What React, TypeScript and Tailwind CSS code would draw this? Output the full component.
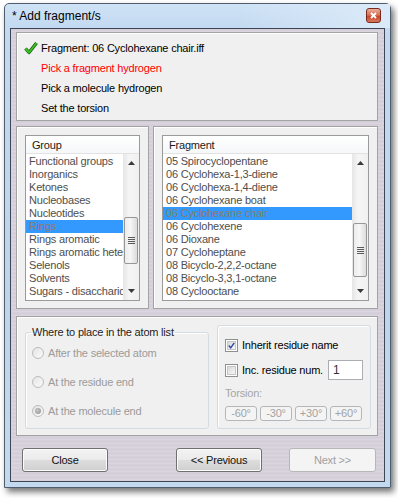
import React from "react";

const groups = [
  "Functional groups",
  "Inorganics",
  "Ketones",
  "Nucleobases",
  "Nucleotides",
  "Rings",
  "Rings aromatic",
  "Rings aromatic heterocycles",
  "Selenols",
  "Solvents",
  "Sugars - disaccharides",
  "Sugars - monosaccharides",
];

const fragments = [
  "05 Spirocyclopentane",
  "06 Cyclohexa-1,3-diene",
  "06 Cyclohexa-1,4-diene",
  "06 Cyclohexane boat",
  "06 Cyclohexane chair",
  "06 Cyclohexene",
  "06 Dioxane",
  "07 Cycloheptane",
  "08 Bicyclo-2,2,2-octane",
  "08 Bicyclo-3,3,1-octane",
  "08 Cyclooctane",
  "09 Cyclononane",
];

function Arrow({ down }: { down?: boolean }) {
  return (
    <svg width="7" height="4" viewBox="0 0 7 4" className="block">
      {down ? (
        <polygon points="0,0 7,0 3.5,4" fill="#3a3a3a" />
      ) : (
        <polygon points="0,4 7,4 3.5,0" fill="#3a3a3a" />
      )}
    </svg>
  );
}

// scrollbar: thumbGap = distance from under the up button to the thumb
function ScrollBar({ thumbGap, thumbH }: { thumbGap: number; thumbH: number }) {
  return (
    <div className="w-[16px] shrink-0 flex flex-col bg-[linear-gradient(90deg,#e6e6e6,#f5f5f5_40%,#f0f0f0)]">
      <div className="h-[17px] flex items-center justify-center pt-[1px]">
        <Arrow />
      </div>
      <div style={{ height: thumbGap }} />
      <div
        className="mx-[1px] rounded-[2px] border border-[#979797] bg-[linear-gradient(90deg,#ececec,#f6f6f6_45%,#dcdcdc)] flex flex-col items-center justify-center gap-[1px]"
        style={{ height: thumbH }}
      >
        <div className="w-[7px] h-[1px] bg-[#5a5a5a]" />
        <div className="w-[7px] h-[1px] bg-[#5a5a5a]" />
        <div className="w-[7px] h-[1px] bg-[#5a5a5a]" />
        <div className="w-[7px] h-[1px] bg-[#5a5a5a]" />
      </div>
      <div className="flex-1" />
      <div className="h-[17px] flex items-center justify-center pb-[1px]">
        <Arrow down />
      </div>
    </div>
  );
}

function ListBox(props: {
  title: string;
  items: string[];
  selected: number;
  thumbGap: number;
  thumbH: number;
}) {
  return (
    <div className="flex-1 min-w-0 flex flex-col border border-[#9a9a9a] bg-white">
      <div className="h-[18px] border-b border-[#e2e2e2] bg-[linear-gradient(180deg,#ffffff,#f6f7f9)] pl-[6px] pt-[2px] text-[11px] leading-[15px] text-[#1a1a1a]">
        {props.title}
      </div>
      <div className="flex-1 flex min-h-0">
        <div className="flex-1 min-w-0 overflow-hidden pt-[1px]">
          {props.items.map((it, i) => (
            <div
              key={it}
              className={
                i === props.selected
                  ? "h-[13px] leading-[13px] pl-[3px] whitespace-nowrap overflow-hidden bg-[#3399ff] text-[#8c7c66]"
                  : "h-[13px] leading-[13px] pl-[3px] whitespace-nowrap overflow-hidden text-[#4e4e4e]"
              }
            >
              {it}
            </div>
          ))}
        </div>
        <ScrollBar thumbGap={props.thumbGap} thumbH={props.thumbH} />
      </div>
    </div>
  );
}

function Radio({ label, checked }: { label: string; checked?: boolean }) {
  return (
    <div className="h-[20px] flex items-center gap-[4px] pl-[6px]">
      <div className="w-[12px] h-[12px] rounded-full border border-[#bdbdbd] bg-[linear-gradient(135deg,#e4e4e4,#fbfbfb)] flex items-center justify-center">
        {checked && <div className="w-[6px] h-[6px] rounded-full bg-[radial-gradient(circle_at_40%_40%,#c8c8c8,#8c8c8c)]" />}
      </div>
      <span className="text-[#9b9b9b]">{label}</span>
    </div>
  );
}

function CheckBox({ checked }: { checked?: boolean }) {
  return (
    <div className="w-[13px] h-[13px] border border-[#8e8f8f] bg-white p-[1px]">
      <div className="w-full h-full border border-[#c6c6c6] bg-[linear-gradient(135deg,#d8d8d8,#f7f7f7)] flex items-center justify-center">
        {checked && (
          <svg width="9" height="9" viewBox="0 0 9 9" className="block">
            <path d="M1 4.5 L3.5 7.5 L8 1" fill="none" stroke="#2a47a4" strokeWidth="1.8" />
          </svg>
        )}
      </div>
    </div>
  );
}

function TorsionBtn({ label }: { label: string }) {
  return (
    <div className="w-[32px] h-[15px] rounded-[3px] border border-[#b4b7b9] bg-[#f4f4f4] flex items-center justify-center text-[#a2a2a2] leading-[13px]">
      {label}
    </div>
  );
}

function WinButton({ label, disabled, w }: { label: string; disabled?: boolean; w: string }) {
  return (
    <div
      className={
        disabled
          ? `${w} h-[24px] rounded-[3px] border border-[#b5b8ba] bg-[#f4f4f4] flex items-center justify-center text-[#a0a0a0]`
          : `${w} h-[24px] rounded-[3px] border border-[#707070] bg-[linear-gradient(180deg,#f3f3f3,#ebebeb_48%,#dddddd_52%,#cfcfcf)] shadow-[inset_0_0_0_1px_#fcfcfc] flex items-center justify-center text-[#111]`
      }
    >
      {label}
    </div>
  );
}

export default function App() {
  return (
    <div className="w-[398px] h-[498px] bg-white pt-[3px] pl-[4px] font-['Liberation_Sans',Arial,sans-serif] text-[11px] tracking-[-0.2px]">
      <div className="w-[387px] h-[485px] flex flex-col rounded-t-[5px] border border-[#4f5d6c] bg-[linear-gradient(180deg,#cfe2f6,#c2d9f1_24px,#bcd4ec_60%,#c3d9ef)] shadow-[3px_4px_6px_rgba(0,0,0,0.55)]">
        {/* title bar */}
        <div className="h-[24px] flex justify-between pl-[7px] pr-[9px] pt-[4px] bg-[linear-gradient(90deg,transparent_60%,#dbeaf8)]">
          <span className="text-[12px] tracking-normal leading-[16px] text-black">* Add fragment/s</span>
          <div className="w-[15px] h-[15px] rounded-[3px] border border-[#7a2a1c] bg-[linear-gradient(180deg,#eab0a0,#d7674a_50%,#c5442a_55%,#d9785a)] flex items-center justify-center">
            <svg width="7" height="7" viewBox="0 0 7 7" className="block">
              <path d="M1 1 L6 6 M6 1 L1 6" stroke="#fff" strokeWidth="1.8" />
            </svg>
          </div>
        </div>

        {/* client area */}
        <div className="mx-[5px] mb-[5px] h-[454px] border border-[#3d4652] bg-[repeating-linear-gradient(180deg,#d8d3dd_0px,#cfc9d5_1px,#dcd8e1_2px,#d3cdd8_4px)] flex flex-col pl-[5px] pr-[6px] pt-[3px]">
          {/* steps */}
          <div className="h-[89px] border border-[#a3a3a3] bg-[#f0f0f0] shadow-[inset_1px_1px_0_#ffffff] pt-[5px] pl-[7px]">
            <div className="h-[20px] flex items-center gap-[3px]">
              <svg width="14" height="14" viewBox="0 0 14 14" className="block">
                <path d="M1.5 7.5 L5 11.5 L12.5 2" fill="none" stroke="#1d5e12" strokeWidth="3.4" strokeLinejoin="round" />
                <path d="M1.5 7.5 L5 11.5 L12.5 2" fill="none" stroke="#3cbf26" strokeWidth="2" strokeLinejoin="round" />
              </svg>
              <span className="text-black">Fragment: 06 Cyclohexane chair.iff</span>
            </div>
            <div className="h-[20px] flex items-center pl-[17px] text-[#ff0000]">Pick a fragment hydrogen</div>
            <div className="h-[20px] flex items-center pl-[17px] text-black">Pick a molecule hydrogen</div>
            <div className="h-[20px] flex items-center pl-[17px] text-black">Set the torsion</div>
          </div>

          {/* lists */}
          <div className="mt-[5px] h-[183px] flex gap-[4px]">
            <div className="w-[133px] shrink-0 flex border border-[#a3a3a3] bg-[#f0f0f0] shadow-[inset_1px_1px_0_#ffffff] p-[8px] pb-[7px]">
              <ListBox title="Group" items={groups} selected={5} thumbGap={46} thumbH={47} />
            </div>
            <div className="flex-1 min-w-0 flex border border-[#a3a3a3] bg-[#f0f0f0] shadow-[inset_1px_1px_0_#ffffff] p-[8px] pb-[7px]">
              <ListBox title="Fragment" items={fragments} selected={4} thumbGap={52} thumbH={54} />
            </div>
          </div>

          {/* placement options */}
          <div className="mt-[7px] h-[120px] flex items-start border border-[#a3a3a3] bg-[#f0f0f0] shadow-[inset_1px_1px_0_#ffffff] pl-[8px] pt-[8px]">
            <fieldset className="mt-[1px] w-[184px] h-[103px] rounded-[3px] border border-[#d3dce2] shadow-[inset_1px_1px_0_#fff]">
              <legend className="ml-[5px] px-[1px] leading-[13px] text-[#1e1e1e]">Where to place in the atom list</legend>
              <div className="flex flex-col gap-[9px] pt-[4px]">
                <Radio label="After the selected atom" />
                <Radio label="At the residue end" />
                <Radio label="At the molecule end" checked />
              </div>
            </fieldset>
            <div className="ml-[8px] w-[154px] h-[104px] rounded-[3px] border border-[#d3dce2] shadow-[inset_1px_1px_0_#fff] pl-[7px] pr-[7px] pt-[9px] flex flex-col">
              <div className="h-[20px] flex items-center gap-[4px] text-black">
                <CheckBox checked />
                <span>Inherit residue name</span>
              </div>
              <div className="mt-[5px] h-[20px] flex items-center gap-[4px] text-black">
                <CheckBox />
                <span>Inc. residue num.</span>
                <div className="ml-auto w-[35px] h-[20px] border border-[#abadb3] bg-white pl-[4px] leading-[18px] text-[12px] text-[#333]">1</div>
              </div>
              <div className="mt-[7px] leading-[13px] text-[#a6a6a6]">Torsion:</div>
              <div className="mt-[6px] flex gap-[3px]">
                <TorsionBtn label="-60°" />
                <TorsionBtn label="-30°" />
                <TorsionBtn label="+30°" />
                <TorsionBtn label="+60°" />
              </div>
            </div>
          </div>

          {/* footer */}
          <div className="mt-[12px] flex pl-[6px]">
            <WinButton label="Close" w="w-[86px]" />
            <div className="ml-[68px]">
              <WinButton label="<< Previous" w="w-[86px]" />
            </div>
            <div className="ml-[27px]">
              <WinButton label="Next >>" w="w-[87px]" disabled />
            </div>
          </div>
        </div>
      </div>
    </div>
  );
}
